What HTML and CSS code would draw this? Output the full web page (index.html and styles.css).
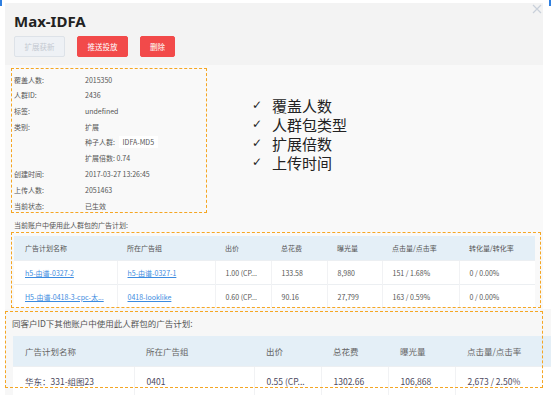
FILE: index.html
```html
<!DOCTYPE html>
<html lang="zh">
<head>
<meta charset="utf-8">
<link rel="stylesheet" href="styles.css">
</head>
<body>
<span class="mark mark-l"></span>
<span class="mark mark-r"></span>
<div class="modal">
  <div class="modal-head">
    <h1 class="title">Max-IDFA</h1>
    <div class="actions">
      <button class="btn btn-disabled">扩展获新</button>
      <button class="btn btn-red">推送投放</button>
      <button class="btn btn-red btn-small">删除</button>
    </div>
    <svg class="close" width="10" height="10" viewBox="0 0 10 10"><path d="M1 1L9 9M9 1L1 9" stroke="#c9d0da" stroke-width="1.2" fill="none"/></svg>
  </div>
  <div class="modal-body">
    <div class="info-row">
      <div class="info">
        <div class="kv"><span class="k">覆盖人数:</span><span class="v">2015350</span></div>
        <div class="kv"><span class="k">人群ID:</span><span class="v">2436</span></div>
        <div class="kv"><span class="k">标签:</span><span class="v">undefined</span></div>
        <div class="kv"><span class="k">类别:</span><span class="v">扩展</span></div>
        <div class="kv"><span class="k"></span><span class="v">种子人群: <span class="tag">IDFA-MD5</span></span></div>
        <div class="kv"><span class="k"></span><span class="v">扩展倍数: 0.74</span></div>
        <div class="kv kv-gap"><span class="k">创建时间:</span><span class="v">2017-03-27 13:26:45</span></div>
        <div class="kv"><span class="k">上传人数:</span><span class="v">2051463</span></div>
        <div class="kv"><span class="k">当前状态:</span><span class="v">已生效</span></div>
      </div>
      <ul class="checklist">
        <li><span class="check">✓</span>覆盖人数</li>
        <li><span class="check">✓</span>人群包类型</li>
        <li><span class="check">✓</span>扩展倍数</li>
        <li><span class="check">✓</span>上传时间</li>
      </ul>
    </div>
    <div class="section-label">当前账户中使用此人群包的广告计划:</div>
    <div class="table-box">
      <table class="grid grid-1">
        <colgroup><col style="width:103px"><col style="width:98px"><col style="width:56px"><col style="width:56px"><col style="width:55px"><col style="width:77px"><col></colgroup>
        <thead><tr><th>广告计划名称</th><th>所在广告组</th><th>出价</th><th>总花费</th><th>曝光量</th><th>点击量/点击率</th><th>转化量/转化率</th></tr></thead>
        <tbody>
          <tr><td><a class="lnk">h5-由谱-0327-2</a></td><td><a class="lnk">h5-由谱-0327-1</a></td><td>1.00 (CP...</td><td>133.58</td><td>8,980</td><td>151 / 1.68%</td><td>0 / 0.00%</td></tr>
          <tr><td><a class="lnk">H5-由谱-0418-3-cpc-太...</a></td><td><a class="lnk">0418-lookIike</a></td><td>0.60 (CP...</td><td>90.16</td><td>27,799</td><td>163 / 0.59%</td><td>0 / 0.00%</td></tr>
        </tbody>
      </table>
    </div>
  </div>
</div>
<div class="lower">
  <div class="lower-label">同客户ID下其他账户中使用此人群包的广告计划:</div>
  <table class="grid grid-2">
    <colgroup><col style="width:121px"><col style="width:120px"><col style="width:67px"><col style="width:67px"><col style="width:67px"><col></colgroup>
    <thead><tr><th>广告计划名称</th><th>所在广告组</th><th>出价</th><th>总花费</th><th>曝光量</th><th>点击量/点击率</th></tr></thead>
    <tbody>
      <tr><td>华东：331-组图23</td><td>0401</td><td>0.55 (CP...</td><td>1302.66</td><td>106,868</td><td>2,673 / 2.50%</td></tr>
    </tbody>
  </table>
  <div class="lower-box"></div>
</div>
</body>
</html>
```

FILE: styles.css
```css
html, body {
  margin: 0;
  padding: 0;
  background: #ffffff;
  width: 551px;
  height: 399px;
  overflow: hidden;
  font-family: "Noto Sans CJK SC", "Noto Sans", sans-serif;
  color: #555;
}

.mark {
  position: absolute;
  top: 0;
  width: 2px;
  height: 6px;
  background: #2f7fe0;
}
.mark-l { left: 0; }
.mark-r { left: 549px; }

.modal {
  margin: 3px 0 0 5px;
  width: 538px;
}

.modal-head {
  position: relative;
  background: #f3f3f3;
  height: 62px;
  padding: 0 9px;
  box-sizing: border-box;
}

.title {
  margin: 0;
  padding-top: 8px;
  font-family: "Noto Sans", "Open Sans", sans-serif;
  font-size: 15px;
  font-weight: 700;
  line-height: 20px;
  color: #222;
}

.actions {
  display: flex;
  gap: 12px;
  margin-top: 5px;
}

.btn {
  height: 21px;
  width: 51px;
  padding: 0;
  border: 1px solid transparent;
  border-radius: 2px;
  font-family: "Noto Sans CJK SC", sans-serif;
  font-size: 7.5px;
  line-height: 19px;
}
.btn-disabled {
  background: #eef1f5;
  border-color: #dde2e8;
  color: #c4c9d1;
}
.btn-red {
  background: #f24a4a;
  border-color: #f24a4a;
  color: #fff;
}
.btn-small { width: 35px; }

.close {
  position: absolute;
  right: 1px;
  top: 1px;
}

.modal-body {
  background: #f9f9f9;
  height: 244px;
  padding: 3px 0 0 6px;
  box-sizing: border-box;
}

.info-row {
  display: flex;
}

.info {
  width: 196px;
  height: 145px;
  box-sizing: border-box;
  border: 1px dashed #f5a623;
  padding: 3px 0 0 2px;
}

.kv {
  display: flex;
  height: 15.6px;
  align-items: center;
  font-size: 7px;
  line-height: 10px;
}
.kv-gap { margin-top: 1px; }
.k { width: 71px; color: #555; }
.v { color: #555; }
.tag {
  background: #fff;
  padding: 1px 4px;
  margin-left: 2px;
}

.checklist {
  list-style: none;
  margin: 0 0 0 45px;
  padding: 28px 0 0 0;
  font-size: 15px;
  line-height: 19px;
  color: #222;
}
.checklist li {
  display: flex;
  align-items: center;
}
.check {
  width: 20px;
  font-family: "DejaVu Sans", sans-serif;
  font-size: 12px;
}

.section-label {
  margin-top: 7px;
  padding-left: 3px;
  font-size: 7px;
  line-height: 10px;
  color: #555;
}

.table-box {
  margin-top: 2px;
  width: 530px;
  height: 76px;
  box-sizing: border-box;
  border: 1px dashed #f5a623;
  padding: 3px 5px 0 2px;
  overflow: hidden;
}

.grid {
  border-collapse: collapse;
  table-layout: fixed;
  background: #fff;
}
.grid th {
  background: #e4eff7;
  font-weight: 400;
  text-align: left;
  color: #555;
  white-space: nowrap;
}
.grid td {
  border-top: 1px solid #eceff2;
  border-left: 1px solid #f1f2f4;
  white-space: nowrap;
  overflow: hidden;
  color: #555;
}
.grid td:first-child { border-left: none; }

.grid-1 {
  width: 521px;
  font-size: 7px;
}
.grid-1 th { height: 24px; padding: 0 0 0 10px; }
.grid-1 td { height: 23px; padding: 0 0 0 10px; }
.grid-1 th:first-child, .grid-1 td:first-child { padding-left: 11px; }

.lnk {
  color: #3b8be0;
  text-decoration: underline;
}

.lower {
  position: relative;
  margin-left: 5px;
  width: 546px;
  height: 86px;
  background: #f7f7f7;
  overflow: hidden;
}

.lower-label {
  padding: 8px 0 0 7px;
  font-size: 8.5px;
  line-height: 12px;
  color: #555;
}

.grid-2 {
  margin: 7px 0 0 8px;
  width: 580px;
  font-size: 8.5px;
}
.grid-2 th { height: 30px; padding: 0 0 0 12px; color: #666; }
.grid-2 td { height: 28px; padding: 0 0 0 12px; color: #4d4a60; }

.lower-box {
  position: absolute;
  left: 0;
  top: 2px;
  width: 538px;
  height: 77px;
  box-sizing: border-box;
  border: 1px dashed #f5a623;
}
```
